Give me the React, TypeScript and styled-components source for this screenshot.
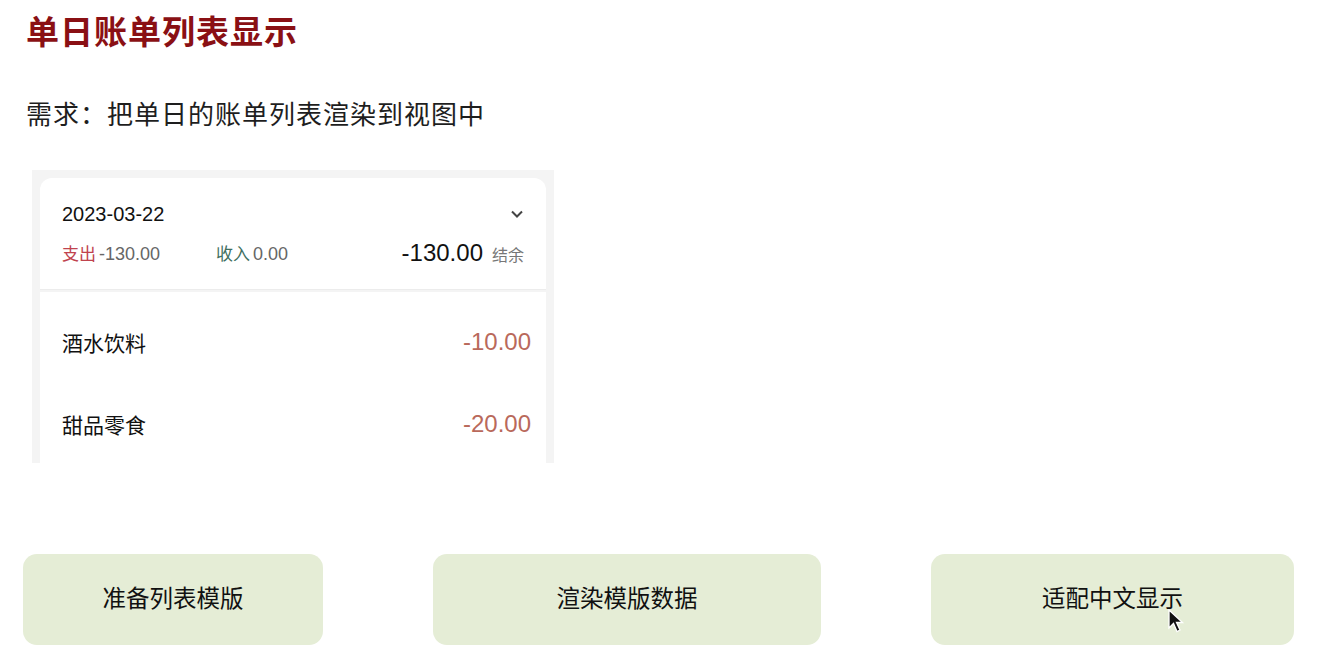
import React from "react";
import styled, { createGlobalStyle } from "styled-components";

const Global = createGlobalStyle`
  html, body { margin: 0; padding: 0; background: #fff; }
  body { font-family: "Liberation Sans", "Noto Sans CJK SC", sans-serif; color: #1a1a1a; }
  * { box-sizing: border-box; }
`;

const Page = styled.div`
  position: relative;
  width: 1337px;
  height: 661px;
  overflow: hidden;
  padding: 10px 0 0 0;
`;

const Title = styled.h1`
  margin: 0 0 0 26px;
  font-family: "Noto Sans CJK SC", sans-serif;
  font-size: 33px;
  line-height: 40px;
  font-weight: 700;
  color: #8a1014;
  letter-spacing: 1px;
`;

const Subtitle = styled.p`
  margin: 44px 0 0 26px;
  font-family: "Noto Sans CJK SC", sans-serif;
  font-size: 26px;
  line-height: 38px;
  color: #1e1e1e;
  letter-spacing: 1px;
`;

const Frame = styled.div`
  margin: 38px 0 0 32px;
  width: 522px;
  height: 293px;
  overflow: hidden;
  background: #f4f4f4;
  padding: 8px 8px 0;
  display: flex;
  flex-direction: column;
  gap: 2px;
`;

const Header = styled.div`
  background: #fff;
  border-radius: 12px 12px 0 0;
  height: 112px;
  flex-shrink: 0;
  padding: 0 22px;
  border-bottom: 1px solid #ececec;
  display: flex;
  flex-direction: column;
`;

const DateRow = styled.div`
  height: 72px;
  display: flex;
  align-items: center;
  justify-content: space-between;
  font-size: 20px;
  color: #111;
`;

const StatsRow = styled.div`
  display: flex;
  align-items: center;
  height: 10px;
  margin-top: -3px;
`;

const Stat = styled.span`
  font-size: 18px;
  color: #666;
  width: 154px;
  white-space: nowrap;
`;

const StatLabel = styled.span<{ $tone: string }>`
  font-family: "Noto Sans CJK SC", sans-serif;
  font-size: 17px;
  color: ${(p) => p.$tone};
  margin-right: 3px;
`;

const Balance = styled.div`
  margin-left: auto;
  display: flex;
  align-items: baseline;
  gap: 9px;
  padding-top: 2px;
`;

const BalanceNum = styled.span`
  font-size: 24px;
  color: #111;
`;

const BalanceLabel = styled.span`
  font-family: "Noto Sans CJK SC", sans-serif;
  font-size: 16px;
  color: #777;
`;

const List = styled.div`
  background: #fff;
  flex: 1;
  padding: 9px 22px 0;
`;

const Item = styled.div`
  height: 82px;
  display: flex;
  align-items: center;
  justify-content: space-between;
`;

const ItemName = styled.span`
  font-family: "Noto Sans CJK SC", sans-serif;
  font-size: 21px;
  color: #111;
`;

const ItemAmount = styled.span`
  font-size: 24px;
  color: #b9695b;
  margin-right: -7px;
`;

const Buttons = styled.div`
  position: absolute;
  left: 23px;
  top: 554px;
  display: grid;
  grid-template-columns: 300px 388px 363px;
  column-gap: 110px;
`;

const ActionButton = styled.div`
  height: 91px;
  border-radius: 14px;
  background: #e5edd6;
  display: flex;
  align-items: center;
  justify-content: center;
  padding-bottom: 5px;
  font-family: "Noto Sans CJK SC", sans-serif;
  font-size: 23.5px;
  color: #111;
`;

const Cursor = styled.svg`
  position: absolute;
  left: 1168px;
  top: 609px;
`;

const Chevron = () => (
  <svg width="14" height="10" viewBox="0 0 14 10">
    <path d="M2 2.5 L7 7.5 L12 2.5" fill="none" stroke="#444" strokeWidth="2" />
  </svg>
);

const items = [
  { name: "酒水饮料", amount: "-10.00" },
  { name: "甜品零食", amount: "-20.00" },
];

export default function App() {
  return (
    <Page>
      <Global />
      <Title>单日账单列表显示</Title>
      <Subtitle>需求：把单日的账单列表渲染到视图中</Subtitle>
      <Frame>
        <Header>
          <DateRow>
            <span>2023-03-22</span>
            <Chevron />
          </DateRow>
          <StatsRow>
            <Stat>
              <StatLabel $tone="#c0434e">支出</StatLabel>-130.00
            </Stat>
            <Stat>
              <StatLabel $tone="#3f6f60">收入</StatLabel>0.00
            </Stat>
            <Balance>
              <BalanceNum>-130.00</BalanceNum>
              <BalanceLabel>结余</BalanceLabel>
            </Balance>
          </StatsRow>
        </Header>
        <List>
          {items.map((it) => (
            <Item key={it.name}>
              <ItemName>{it.name}</ItemName>
              <ItemAmount>{it.amount}</ItemAmount>
            </Item>
          ))}
        </List>
      </Frame>
      <Buttons>
        <ActionButton>准备列表模版</ActionButton>
        <ActionButton>渲染模版数据</ActionButton>
        <ActionButton>适配中文显示</ActionButton>
      </Buttons>
      <Cursor width="18" height="26" viewBox="0 0 18 26">
        <path d="M1 1 L1 19 L5.5 14.5 L9 22.5 L12 21 L8.5 13.5 L14.5 13.5 Z" fill="#111" stroke="#fff" strokeWidth="1.3" />
      </Cursor>
    </Page>
  );
}
